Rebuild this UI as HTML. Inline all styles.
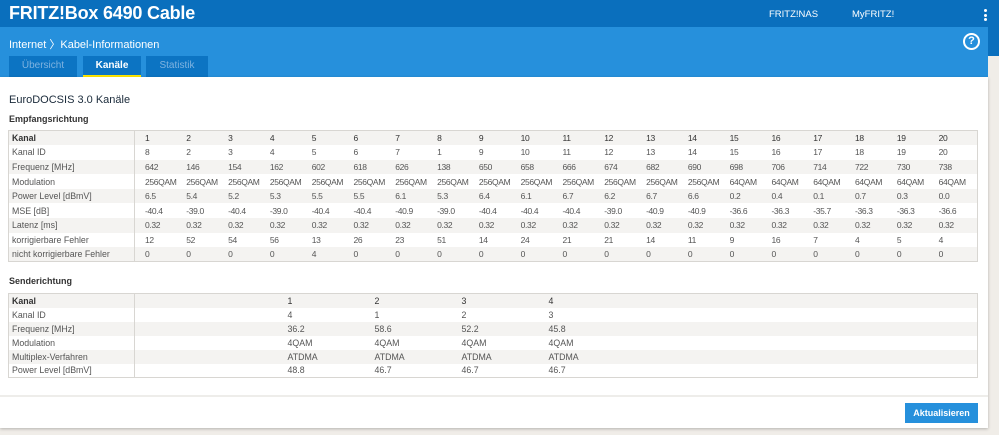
<!DOCTYPE html>
<html><head><meta charset="utf-8"><style>
*{margin:0;padding:0;box-sizing:border-box}
body{width:999px;height:435px;overflow:hidden;background:#f0ede8;font-family:"Liberation Sans",sans-serif;position:relative}
.top{position:absolute;left:0;top:0;width:999px;height:27px;background:#0a6fbd}
.rs{position:absolute;left:988px;top:27px;width:11px;height:29px;background:#0a6fbd}
.title{position:absolute;left:9px;top:3px;color:#fff;font-weight:bold;font-size:18px;letter-spacing:-0.2px}
.nav{position:absolute;top:9px;color:#fff;font-size:9.5px}
.dots{position:absolute;left:984px;top:9px;width:3px}
.dots i{display:block;width:3px;height:3px;background:#fff;border-radius:50%;margin-bottom:1.5px}
.band{position:absolute;left:0;top:27px;width:988px;height:50px;background:#2690dc}
.crumb{position:absolute;left:9px;top:9px;color:#fff;font-size:11px}
.help{position:absolute;left:963px;top:6px;width:17px;height:17px;border:2px solid #fff;border-radius:50%;color:#fff;font-weight:bold;font-size:11px;text-align:center;line-height:13px}
.tab{position:absolute;top:29px;height:21px;background:#0c74c3;color:#7fb3e0;font-size:10px;text-align:center;line-height:20px}
.tab.a{color:#fff;font-weight:bold;border-bottom:2px solid #ffe600}
.card{position:absolute;left:0;top:77px;width:988px;height:351px;background:#fff;box-shadow:0 1px 3px rgba(0,0,0,.25)}
h1{position:absolute;left:9px;top:17px;font-size:11px;font-weight:normal;color:#1a2a3a}
h2{position:absolute;left:9px;font-size:9px;font-weight:bold;color:#333}
table{position:absolute;left:8px;width:970px;border-collapse:collapse;border:1px solid #d8d6d2;font-size:8.8px;color:#555;table-layout:fixed}
td{height:14.6px;padding:0 0 0 3px;white-space:nowrap}
.t1 td+td{padding-left:10px;letter-spacing:-0.35px;font-size:8.5px}
tr:nth-child(odd){background:#f4f3f1}
tr:first-child td{color:#333}
tr:first-child td:first-child{font-weight:bold}
td:first-child{border-right:1px solid #d8d6d2}
.t2 td{height:14px}
.t2 td+td+td{padding-left:11px}
.line{position:absolute;left:0;top:318px;width:988px;height:2px;background:#eeedea}
.btn{position:absolute;left:905px;top:326px;width:73px;height:20px;background:#2690dc;color:#fff;font-size:9px;text-align:center;line-height:20px;font-weight:bold}
</style></head><body>
<div class="top"></div><div class="rs"></div>
<div class="title">FRITZ!Box 6490 Cable</div>
<div class="nav" style="left:769px">FRITZ!NAS</div>
<div class="nav" style="left:852px">MyFRITZ!</div>
<div class="dots"><i></i><i></i><i></i></div>
<div class="band">
<div class="crumb">Internet 〉Kabel-Informationen</div>
<div class="help">?</div>
<div class="tab" style="left:9px;width:68px">Übersicht</div>
<div class="tab a" style="left:83px;width:58px">Kanäle</div>
<div class="tab" style="left:146px;width:62px">Statistik</div>
</div>
<div class="card">
<h1>EuroDOCSIS 3.0 Kanäle</h1>
<h2 style="top:37px">Empfangsrichtung</h2>
<table class="t1" style="top:53px">
<colgroup><col style="width:126px"><col span="19" style="width:41.8px"><col></colgroup>
<tr><td>Kanal</td><td>1</td><td>2</td><td>3</td><td>4</td><td>5</td><td>6</td><td>7</td><td>8</td><td>9</td><td>10</td><td>11</td><td>12</td><td>13</td><td>14</td><td>15</td><td>16</td><td>17</td><td>18</td><td>19</td><td>20</td></tr>
<tr><td>Kanal ID</td><td>8</td><td>2</td><td>3</td><td>4</td><td>5</td><td>6</td><td>7</td><td>1</td><td>9</td><td>10</td><td>11</td><td>12</td><td>13</td><td>14</td><td>15</td><td>16</td><td>17</td><td>18</td><td>19</td><td>20</td></tr>
<tr><td>Frequenz [MHz]</td><td>642</td><td>146</td><td>154</td><td>162</td><td>602</td><td>618</td><td>626</td><td>138</td><td>650</td><td>658</td><td>666</td><td>674</td><td>682</td><td>690</td><td>698</td><td>706</td><td>714</td><td>722</td><td>730</td><td>738</td></tr>
<tr><td>Modulation</td><td>256QAM</td><td>256QAM</td><td>256QAM</td><td>256QAM</td><td>256QAM</td><td>256QAM</td><td>256QAM</td><td>256QAM</td><td>256QAM</td><td>256QAM</td><td>256QAM</td><td>256QAM</td><td>256QAM</td><td>256QAM</td><td>64QAM</td><td>64QAM</td><td>64QAM</td><td>64QAM</td><td>64QAM</td><td>64QAM</td></tr>
<tr><td>Power Level [dBmV]</td><td>6.5</td><td>5.4</td><td>5.2</td><td>5.3</td><td>5.5</td><td>5.5</td><td>6.1</td><td>5.3</td><td>6.4</td><td>6.1</td><td>6.7</td><td>6.2</td><td>6.7</td><td>6.6</td><td>0.2</td><td>0.4</td><td>0.1</td><td>0.7</td><td>0.3</td><td>0.0</td></tr>
<tr><td>MSE [dB]</td><td>-40.4</td><td>-39.0</td><td>-40.4</td><td>-39.0</td><td>-40.4</td><td>-40.4</td><td>-40.9</td><td>-39.0</td><td>-40.4</td><td>-40.4</td><td>-40.4</td><td>-39.0</td><td>-40.9</td><td>-40.9</td><td>-36.6</td><td>-36.3</td><td>-35.7</td><td>-36.3</td><td>-36.3</td><td>-36.6</td></tr>
<tr><td>Latenz [ms]</td><td>0.32</td><td>0.32</td><td>0.32</td><td>0.32</td><td>0.32</td><td>0.32</td><td>0.32</td><td>0.32</td><td>0.32</td><td>0.32</td><td>0.32</td><td>0.32</td><td>0.32</td><td>0.32</td><td>0.32</td><td>0.32</td><td>0.32</td><td>0.32</td><td>0.32</td><td>0.32</td></tr>
<tr><td>korrigierbare Fehler</td><td>12</td><td>52</td><td>54</td><td>56</td><td>13</td><td>26</td><td>23</td><td>51</td><td>14</td><td>24</td><td>21</td><td>21</td><td>14</td><td>11</td><td>9</td><td>16</td><td>7</td><td>4</td><td>5</td><td>4</td></tr>
<tr><td>nicht korrigierbare Fehler</td><td>0</td><td>0</td><td>0</td><td>0</td><td>4</td><td>0</td><td>0</td><td>0</td><td>0</td><td>0</td><td>0</td><td>0</td><td>0</td><td>0</td><td>0</td><td>0</td><td>0</td><td>0</td><td>0</td><td>0</td></tr>
</table>
<h2 style="top:199px">Senderichtung</h2>
<table class="t2" style="top:216px">
<colgroup><col style="width:126px"><col style="width:142px"><col style="width:87px"><col style="width:87px"><col style="width:87px"><col></colgroup>
<tr><td>Kanal</td><td></td><td>1</td><td>2</td><td>3</td><td>4</td></tr>
<tr><td>Kanal ID</td><td></td><td>4</td><td>1</td><td>2</td><td>3</td></tr>
<tr><td>Frequenz [MHz]</td><td></td><td>36.2</td><td>58.6</td><td>52.2</td><td>45.8</td></tr>
<tr><td>Modulation</td><td></td><td>4QAM</td><td>4QAM</td><td>4QAM</td><td>4QAM</td></tr>
<tr><td>Multiplex-Verfahren</td><td></td><td>ATDMA</td><td>ATDMA</td><td>ATDMA</td><td>ATDMA</td></tr>
<tr><td>Power Level [dBmV]</td><td></td><td>48.8</td><td>46.7</td><td>46.7</td><td>46.7</td></tr>
</table>
<div class="line"></div>
<div class="btn">Aktualisieren</div>
</div>
</body></html>
